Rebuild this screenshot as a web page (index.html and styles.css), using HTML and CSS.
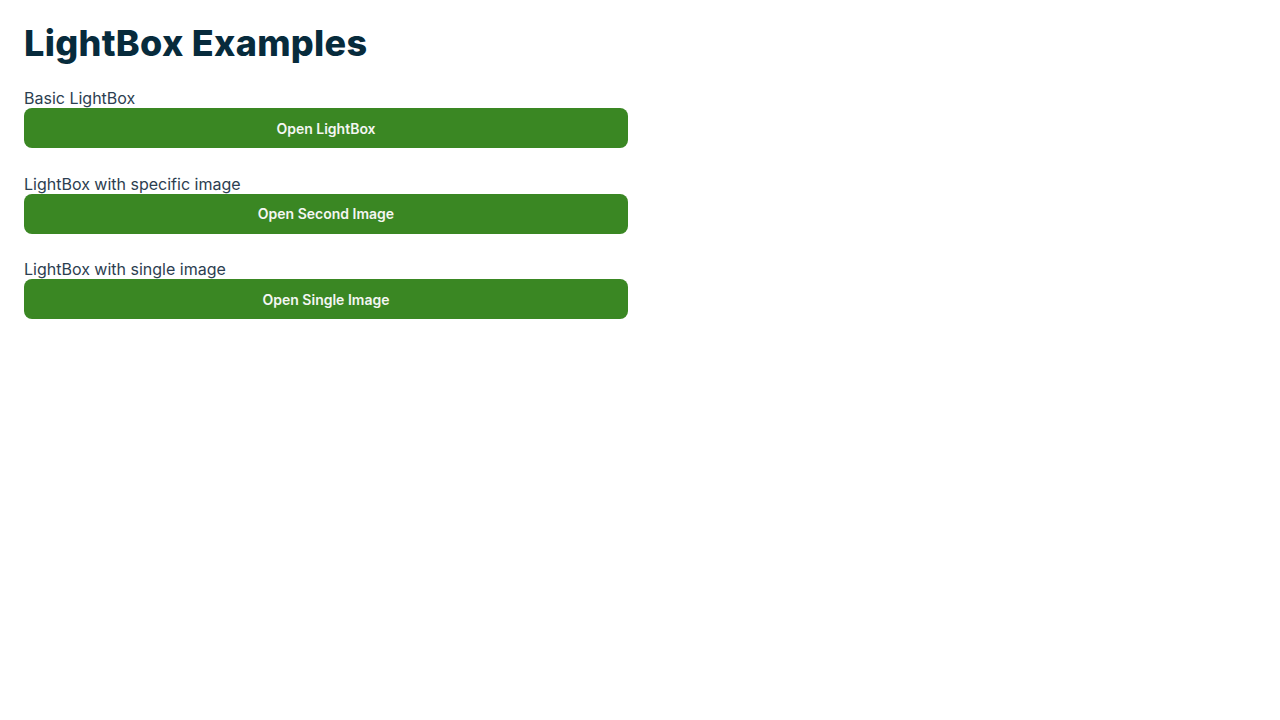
FILE: index.html
```html
<!DOCTYPE html>
<html lang="en">
<head>
<meta charset="utf-8">
<title>LightBox Examples</title>
<link rel="stylesheet" href="styles.css">
</head>
<body>
<main class="page">
  <h1 class="title">LightBox Examples</h1>
  <div class="examples">
    <section class="example">
      <div class="label">Basic LightBox</div>
      <button class="btn">Open LightBox</button>
    </section>
    <section class="example">
      <div class="label">LightBox with specific image</div>
      <button class="btn">Open Second Image</button>
    </section>
    <section class="example">
      <div class="label">LightBox with single image</div>
      <button class="btn">Open Single Image</button>
    </section>
  </div>
</main>
</body>
</html>
```
FILE: styles.css
```css
html, body {
  margin: 0;
  padding: 0;
  background: #ffffff;
}
body {
  font-family: Inter, "Noto Sans", sans-serif;
}
.page {
  padding: 24px;
  display: flex;
  flex-direction: column;
  gap: 24px;
}
.title {
  margin: 0 0 2px;
  font-size: 36px;
  line-height: 38px;
  font-weight: 800;
  letter-spacing: 0.3px;
  color: #072b3c;
}
.examples {
  display: flex;
  flex-direction: column;
  gap: 25.5px;
}
.example {
  display: flex;
  flex-direction: column;
  width: 604px;
}
.label {
  font-size: 16px;
  line-height: 20px;
  color: #2c3e50;
}
.btn {
  height: 40px;
  border: none;
  border-radius: 8px;
  background: #3a8723;
  color: #f4f6f2;
  font-family: Inter, "Noto Sans", sans-serif;
  font-size: 14px;
  font-weight: 600;
  cursor: pointer;
  padding: 0 16px;
}
```
